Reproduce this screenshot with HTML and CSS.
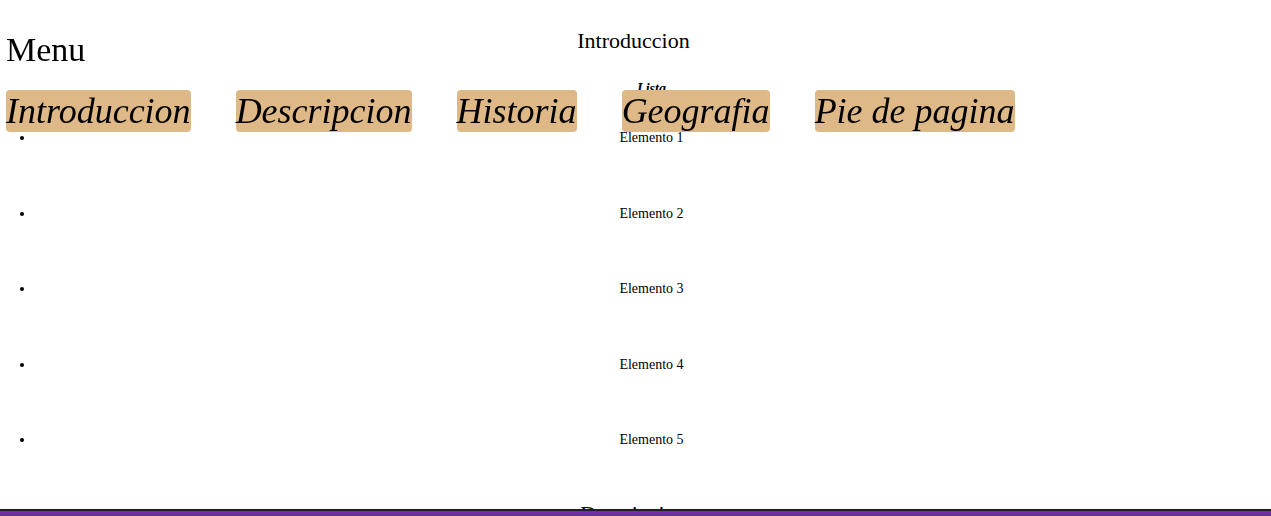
FILE: index.html
```
<!DOCTYPE html>
<html lang="es">
<head>
<meta charset="utf-8">
<title>Menu</title>
<link rel="stylesheet" href="styles.css">
</head>
<body>
<header class="menu">
<h1 class="menu-title">Menu</h1>
<nav class="menu-links">
<a class="menu-link" href="#introduccion">Introduccion</a>
<a class="menu-link" href="#descripcion">Descripcion</a>
<a class="menu-link" href="#historia">Historia</a>
<a class="menu-link" href="#geografia">Geografia</a>
<a class="menu-link" href="#pie">Pie de pagina</a>
</nav>
</header>
<main>
<section id="introduccion">
<h2 class="heading">Introduccion</h2>
<div class="list-block">
<h3 class="list-title">Lista</h3>
<ul class="list">
<li>Elemento 1</li>
<li>Elemento 2</li>
<li>Elemento 3</li>
<li>Elemento 4</li>
<li>Elemento 5</li>
</ul>
</div>
</section>
<section id="descripcion">
<h2 class="heading">Descripcion</h2>
</section>
</main>
<footer class="bar"></footer>
</body>
</html>
```
FILE: styles.css
```
body {
  margin: 0;
  height: 100vh;
  overflow: hidden;
  background: #fff;
  color: #000;
  font-family: "Liberation Serif", "Times New Roman", serif;
}

.menu {
  position: fixed;
  top: 30px;
  left: 6px;
}

.menu-title {
  margin: 0 0 20px;
  font-size: 34px;
  font-weight: 400;
  line-height: 40px;
}

.menu-links {
  display: flex;
  gap: 45px;
}

.menu-link {
  border-radius: 4px;
  background: burlywood;
  color: #000;
  font-size: 36px;
  font-style: italic;
  line-height: 42px;
  text-decoration: none;
  white-space: nowrap;
}

.heading {
  margin: 0;
  padding: 28px 4px 0 0;
  font-size: 22px;
  font-weight: 400;
  line-height: 26px;
  text-align: center;
}

.list-block {
  padding: 27px 0 0 32px;
  text-align: center;
}

.list-title {
  margin: 0;
  font-size: 14px;
  font-style: italic;
  line-height: 16px;
}

.list {
  display: grid;
  grid-auto-rows: 1fr;
  height: 378px;
  margin: 3px 0 0;
  padding: 0 3px;
  font-size: 14px;
  line-height: 75px;
}

#descripcion .heading {
  padding-top: 23px;
}

.bar {
  position: fixed;
  right: 0;
  bottom: 0;
  left: 0;
  height: 4px;
  border-top: 2px solid #1c2030;
  border-bottom: 1px solid #56407c;
  background: #7030a8;
}
```
